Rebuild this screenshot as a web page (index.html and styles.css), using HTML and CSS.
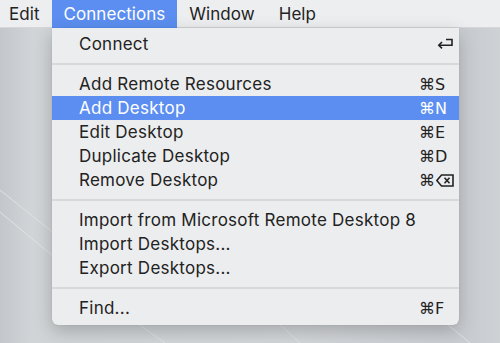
FILE: index.html
```html
<!DOCTYPE html>
<html lang="en">
<head>
    <meta charset="UTF-8">
    <title>Connections menu</title>
    <link rel="stylesheet" href="styles.css">
</head>
<body>
    <div class="desktop">
        <!-- wallpaper lines -->
        <svg class="wallpaper" width="500" height="343" viewBox="0 0 500 343">
            <path d="M0 190 L60 238" />
            <path d="M0 212 L60 262" />
            <path d="M130 318 L165 343" />
            <path d="M275 320 L300 343" />
            <path d="M440 318 L470 343" />
        </svg>

        <nav class="menubar">
            <span class="menu-title first">Edit</span>
            <span class="menu-title active">Connections</span>
            <span class="menu-title">Window</span>
            <span class="menu-title">Help</span>
        </nav>

        <div class="dropdown">
            <div class="item">
                <span>Connect</span>
                <span class="key">
                    <svg class="return" width="17" height="12" viewBox="0 0 17 12">
                        <path d="M9 1.5 H15 V7.2 H2" />
                        <path d="M5 4 L1.8 7.2 L5 10.4" />
                    </svg>
                </span>
            </div>
            <div class="separator"></div>
            <div class="item"><span>Add Remote Resources</span><span class="key">⌘S</span></div>
            <div class="item selected"><span>Add Desktop</span><span class="key">⌘N</span></div>
            <div class="item"><span>Edit Desktop</span><span class="key">⌘E</span></div>
            <div class="item"><span>Duplicate Desktop</span><span class="key">⌘D</span></div>
            <div class="item">
                <span>Remove Desktop</span>
                <span class="key">⌘<svg class="delete" width="18" height="13" viewBox="0 0 18 13">
                        <path d="M5.5 1 H17 V12 H5.5 L0.8 6.5 Z" />
                        <path d="M8.5 3.8 L13.5 9.2 M13.5 3.8 L8.5 9.2" />
                    </svg></span>
            </div>
            <div class="separator"></div>
            <div class="item"><span>Import from Microsoft Remote Desktop 8</span></div>
            <div class="item"><span>Import Desktops...</span></div>
            <div class="item"><span>Export Desktops...</span></div>
            <div class="separator"></div>
            <div class="item"><span>Find...</span><span class="key">⌘F</span></div>
        </div>
    </div>
</body>
</html>
```

FILE: styles.css
```css
* {
    margin: 0;
    padding: 0;
    box-sizing: border-box;
}

body {
    font-family: 'Inter', 'Liberation Sans', sans-serif;
    font-size: 17px;
    letter-spacing: 0.25px;
    color: #222;
    width: 500px;
    height: 343px;
    overflow: hidden;
}

.desktop {
    position: relative;
    width: 500px;
    height: 343px;
    background: linear-gradient(90deg, #c3c7cb 0%, #d0d4d7 6%, #d3d6d9 60%, #c9ccd0 95%, #cfd2d5 100%);
}

.wallpaper {
    position: absolute;
    left: 0;
    top: 0;
}

.wallpaper path {
    stroke: #e0e2e4;
    stroke-width: 1;
    fill: none;
}

.menubar {
    position: relative;
    display: flex;
    height: 28px;
    background-color: #edeef0;
    border-bottom: 1px solid #d6d7d9;
    letter-spacing: 0.05px;
}

.menu-title {
    display: flex;
    align-items: center;
    padding: 0 12px;
    height: 28px;
}

.menu-title.first {
    padding-left: 9px;
}

.menu-title.active {
    background-color: #5b8ef0;
    color: #fff;
}

.dropdown {
    position: absolute;
    left: 52px;
    top: 28px;
    width: 407px;
    padding: 4px 0 5px;
    background-color: #ecedee;
    border-radius: 0 0 6px 6px;
    box-shadow: 0 6px 18px rgba(0, 0, 0, 0.22), 0 0 1px rgba(0, 0, 0, 0.25);
}

.item {
    display: grid;
    grid-template-columns: 1fr 28px;
    align-items: center;
    height: 24px;
    padding: 0 12px 0 27px;
    white-space: nowrap;
}

.item.selected {
    background-color: #5b8ef0;
    color: #fff;
}

.key {
    display: flex;
    align-items: center;
    font-family: 'DejaVu Sans', sans-serif;
    font-size: 16px;
    letter-spacing: 0;
}

.key svg {
    flex-shrink: 0;
}

.return {
    margin-left: 18px;
}

.return path,
.delete path {
    stroke: #222;
    stroke-width: 1.6;
    fill: none;
}

.delete {
    margin-left: 1px;
}

.separator {
    height: 2px;
    margin: 7px 0;
    background-color: #d8d9db;
}
```
